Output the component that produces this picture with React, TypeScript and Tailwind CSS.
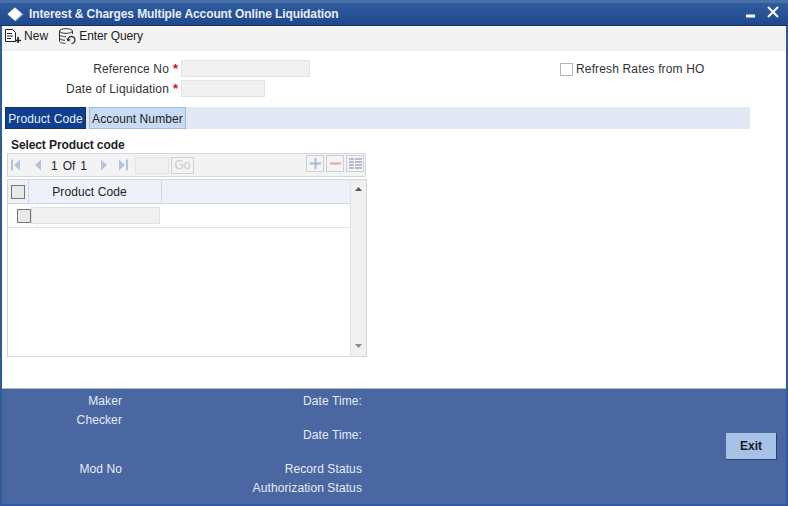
import { ReactNode } from "react";

const FONT = "font-['Liberation_Sans',Arial,sans-serif]";

function NewIcon() {
  return (
    <svg width="18" height="16" viewBox="0 0 18 16" fill="none" stroke="#222" strokeWidth="1">
      <path d="M1.500 1.500h7l3 3v9h-10z" fill="#fff" />
      <path d="M3 5.500h5M3 8h6M3 10.500h4" />
      <path d="M14 9v6M11 12.500h6" strokeWidth="1.600" />
    </svg>
  );
}

function QueryIcon() {
  return (
    <svg width="19" height="17" viewBox="0 0 19 17" fill="none" stroke="#333" strokeWidth="1">
      <ellipse cx="8" cy="3" rx="6.500" ry="2.300" fill="#fff" />
      <path d="M1.500 3v10c0 1.400 3 2.400 6 2.400M14.500 3v3M1.500 6.500c0 1.300 3 2.300 6.500 2.300M1.500 10c0 1.300 3 2.300 5.500 2.300" />
      <path d="M10 12.500a3.500 3.500 0 1 1 3.500 3M9 10.500l1 2.200 2.200-1" strokeWidth="1.300" />
    </svg>
  );
}

function Field({ label, width }: { label: string; width: string }) {
  return (
    <div className="flex h-[20px] items-center">
      <span className="w-[167px] pt-[1px] text-right text-[12px] tracking-[0.15px] text-[#333]">{label}</span>
      <span className="ml-[4px] w-[8px] text-[13px] font-bold leading-none text-[#d01010]">*</span>
      <div className={`h-[17px] border border-[#e3e3e3] bg-[#f0f0f0] ${width}`} />
    </div>
  );
}

function NavButton({ kind }: { kind: "first" | "prev" | "next" | "last" }) {
  const left = kind === "first" || kind === "prev";
  const bar = kind === "first" || kind === "last";
  return (
    <svg width="10" height="12" viewBox="0 0 10 12" fill="#b4c3dc">
      {left ? <path d="M9 0.500v11L3 6z" /> : <path d="M1 0.500v11L7 6z" />}
      {bar && <rect x={left ? 0 : 8} y="0.500" width="2" height="11" />}
    </svg>
  );
}

function GridButton({ children }: { children: ReactNode }) {
  return (
    <div className="flex h-[17px] w-[18px] items-center justify-center border border-[#c9d0dc] bg-[#f4f4f4]">
      {children}
    </div>
  );
}

function FooterLabel({ children, className }: { children: ReactNode; className: string }) {
  return <div className={`text-right text-[12px] leading-[14px] tracking-[0.1px] text-[#e4ecf8] ${className}`}>{children}</div>;
}

export default function App() {
  return (
    <div className={`${FONT} flex h-[506px] w-[788px] flex-col overflow-hidden bg-[#2f5a9b]`}>
      {/* Title bar */}
      <div className="flex h-[26px] shrink-0 items-center border-t-[3px] border-b border-t-[#4a70a8] border-b-[#16305f] bg-gradient-to-b from-[#2f5c9f] to-[#20498c] pl-[7px] pr-[9px]">
        <svg width="17" height="15" viewBox="0 0 17 15">
          <path d="M8.500 0.500L16.500 7.500L8.500 14.500L0.500 7.500z" fill="#8aa4cf" />
          <path d="M7.800 0.500L15 7L7.800 13.500L0.500 7z" fill="#fff" />
        </svg>
        <span className="ml-[5px] text-[12px] font-bold tracking-[-0.1px] text-[#e6eefa]">Interest &amp; Charges Multiple Account Online Liquidation</span>
        <svg className="ml-auto mt-[3px]" width="10" height="4" viewBox="0 0 10 4">
          <rect width="9" height="3" y="0.500" fill="#fff" />
        </svg>
        <svg className="mb-[5px] ml-[11px]" width="12" height="12" viewBox="0 0 12 12" stroke="#fff" strokeWidth="2">
          <path d="M1 1l10 10M11 1L1 11" />
        </svg>
      </div>

      <div className="mx-[2px] flex min-h-0 flex-1 flex-col bg-white">
        {/* Toolbar */}
        <div className="flex h-[25px] shrink-0 items-center border-b border-[#ececec] bg-[#f3f3f3] pb-[4px] pl-[2px] text-[12px] text-[#222]">
          <NewIcon />
          <span className="ml-[2px] tracking-[0.1px]">New</span>
          <span className="ml-[10px]"><QueryIcon /></span>
          <span className="ml-[2px] tracking-[-0.1px]">Enter Query</span>
        </div>

        {/* Form */}
        <div className="relative h-[337px] shrink-0">
          <div className="pt-[7px]">
            <Field label="Reference No" width="w-[129px]" />
            <Field label="Date of Liquidation" width="w-[84px]" />
          </div>
          <label className="absolute left-[558px] top-[12px] flex items-center text-[12px] leading-[13px] tracking-[0.15px] text-[#333]">
            <span className="h-[13px] w-[13px] border border-[#b4b4b4] bg-white" />
            <span className="ml-[3px]">Refresh Rates from HO</span>
          </label>

          {/* Tabs */}
          <div className="ml-[3px] mt-[9px] flex h-[22px] w-[745px] bg-[#e1e8f4] tracking-[0.1px]">
            <div className="flex w-[81px] items-center justify-center border border-[#16305f] bg-[#0f3f8f] pt-[1px] text-[12px] text-[#e8f0fc]">Product Code</div>
            <div className="ml-[3px] flex w-[97px] items-center justify-center border border-[#a3bcdd] bg-[#c7dbf4] pt-[1px] text-[12px] text-[#222]">Account Number</div>
          </div>

          <div className="ml-[9px] mt-[9px] text-[12px] font-bold leading-[14px] tracking-[-0.1px] text-[#222]">Select Product code</div>

          {/* Grid toolbar */}
          <div className="ml-[5px] mt-[1px] flex h-[24px] w-[359px] items-center border border-[#d3d8e0] bg-[#f3f3f3] pl-[3px] text-[12px] text-[#222]">
            <NavButton kind="first" />
            <span className="ml-[11px]"><NavButton kind="prev" /></span>
            <span className="ml-[9px] pt-[1px]">1</span>
            <span className="ml-[5px] pt-[1px]">Of</span>
            <span className="ml-[5px] pt-[1px]">1</span>
            <span className="ml-[13px]"><NavButton kind="next" /></span>
            <span className="ml-[8px]"><NavButton kind="last" /></span>
            <div className="ml-[7px] h-[17px] w-[34px] border border-[#e3e3e3] bg-[#f0f0f0]" />
            <div className="ml-[2px] flex h-[17px] w-[23px] items-center justify-center border border-[#d0d0d0] text-[12px] text-[#c8c8c8]">Go</div>
            <div className="mb-[4px] ml-auto mr-[1px] flex gap-[2px]">
              <GridButton>
                <svg width="11" height="11" viewBox="0 0 11 11" fill="#a9b9d6"><path d="M4.500 0h2v4.500H11v2H6.500V11h-2V6.500H0v-2h4.500z" /></svg>
              </GridButton>
              <GridButton>
                <svg width="11" height="3" viewBox="0 0 11 3"><rect width="11" height="2" y="0.500" fill="#e8a4a4" /></svg>
              </GridButton>
              <GridButton>
                <svg width="13" height="11" viewBox="0 0 13 11" fill="#b4bdcc"><path d="M0 0h5v2H0zM6 0h7v2H6zM0 3h5v2H0zM6 3h7v2H6zM0 6h5v2H0zM6 6h7v2H6zM0 9h5v2H0zM6 9h7v2H6z" /></svg>
              </GridButton>
            </div>
          </div>

          {/* Grid */}
          <div className="ml-[5px] mt-[2px] flex h-[178px] w-[360px] border border-[#d3d8e0] bg-white">
            <div className="min-w-0 flex-1">
              <div className="flex h-[24px] border-b border-[#cfd6e6] bg-[#eef1fa] text-[12px] tracking-[0.1px] text-[#222]">
                <div className="flex w-[21px] items-center justify-center border-r border-[#cfd6e6]">
                  <span className="h-[14px] w-[14px] border border-[#777] bg-[#e9e9e9]" />
                </div>
                <div className="flex w-[133px] items-center justify-center border-r border-[#cfd6e6] pr-[11px] pt-[1px]">Product Code</div>
              </div>
              <div className="flex h-[24px] items-center border-b border-[#e4e4e4]">
                <div className="flex h-full w-[30px] items-center border-r border-[#eeeeee] pl-[9px]">
                  <span className="h-[14px] w-[14px] border border-[#777] bg-[#e9e9e9]" />
                </div>
                <div className="-ml-[7px] h-[17px] w-[129px] border border-[#e0e0e0] bg-[#f0f0f0]" />
              </div>
            </div>
            <div className="flex w-[16px] flex-col items-center justify-between border-l border-[#e4e4e4] bg-[#f0f0f0] pb-[8px] pt-[7px]">
              <svg width="7" height="4" viewBox="0 0 7 4" fill="#555"><path d="M3.500 0L7 4H0z" /></svg>
              <svg width="7" height="4" viewBox="0 0 7 4" fill="#888"><path d="M0 0h7L3.500 4z" /></svg>
            </div>
          </div>
        </div>

        {/* Footer */}
        <div className="flex min-h-0 flex-1 border-t border-[#a8b8d0] bg-[#4a67a1]">
          <div className="mt-[5px] w-[120px]">
            <FooterLabel className="h-[19px]">Maker</FooterLabel>
            <FooterLabel className="h-[49px]">Checker</FooterLabel>
            <FooterLabel className="h-[19px]">Mod No</FooterLabel>
          </div>
          <div className="mt-[5px] w-[240px]">
            <FooterLabel className="h-[34px]">Date Time:</FooterLabel>
            <FooterLabel className="h-[34px]">Date Time:</FooterLabel>
            <FooterLabel className="h-[19px]">Record Status</FooterLabel>
            <FooterLabel className="h-[14px]">Authorization Status</FooterLabel>
          </div>
          <div className="ml-auto mr-[9px] mt-[44px] flex h-[27px] w-[51px] items-center justify-center border-r border-b border-r-[#2c416e] border-b-[#2c416e] bg-[#a5c1e6] text-[12px] font-bold text-[#1a1a1a]">Exit</div>
        </div>
      </div>
      <div className="h-[2px] shrink-0" />
    </div>
  );
}
